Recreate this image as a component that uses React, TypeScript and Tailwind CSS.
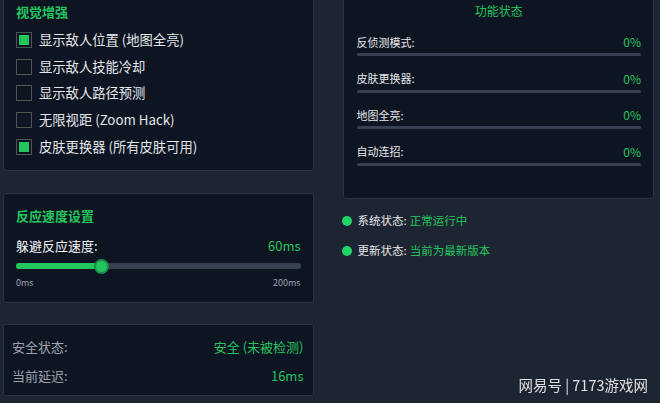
import React from "react";

const font = { fontFamily: '"Noto Sans CJK SC", "Noto Sans", sans-serif' };

const features = [
  { label: "显示敌人位置 (地图全亮)", on: true },
  { label: "显示敌人技能冷却", on: false },
  { label: "显示敌人路径预测", on: false },
  { label: "无限视距 (Zoom Hack)", on: false },
  { label: "皮肤更换器 (所有皮肤可用)", on: true },
];

const statusRows = ["反侦测模式:", "皮肤更换器:", "地图全亮:", "自动连招:"];

export default function App() {
  const speed = 60;
  const pct = (speed / 200) * 100;

  return (
    <div
      className="relative w-[660px] h-[403px] overflow-hidden bg-[#1e2532] text-[#e5e7eb]"
      style={font}
    >
      <div className="flex pl-[3px] pr-[6px] gap-[29px]">
        {/* Left column */}
        <div className="w-[311px] flex flex-col">
          {/* Visual enhancements */}
          <div className="-mt-[10px] h-[181px] bg-[#0e1522] border border-[#2a3343] rounded-[3px] pt-[11px] px-[12px]">
            <h3 className="h-[20px] leading-[20px] text-[13px] font-bold text-[#22c55e]">视觉增强</h3>
            <div className="mt-[5px] flex flex-col">
              {features.map((f) => (
                <div key={f.label} className="h-[26.6px] flex items-center gap-[7px]">
                  <div className="w-[16px] h-[16px] border border-[#4b5a55] flex items-center justify-center">
                    {f.on && <div className="w-[10px] h-[10px] bg-[#22c55e]" />}
                  </div>
                  <span className="text-[13.3px] leading-[18px] text-[#e5e7eb]">{f.label}</span>
                </div>
              ))}
            </div>
          </div>

          {/* Reaction speed */}
          <div className="mt-[22px] h-[110px] bg-[#0e1522] border border-[#2a3343] rounded-[3px] pt-[12px] px-[12px]">
            <h3 className="h-[20px] leading-[20px] text-[13px] font-bold text-[#22c55e]">反应速度设置</h3>
            <div className="mt-[10px] h-[20px] flex items-center justify-between">
              <span className="text-[13px] text-[#f3f4f6]">躲避反应速度:</span>
              <span className="text-[13px] text-[#22c55e]">{speed}ms</span>
            </div>
            <div className="relative mt-[3px] h-[14px] flex items-center">
              <div className="w-full h-[6px] rounded-full bg-[#374151]">
                <div className="h-full rounded-full bg-[#22c55e]" style={{ width: `${pct}%` }} />
              </div>
              <div
                className="absolute w-[15px] h-[15px] -ml-[7px] rounded-full bg-[#22c55e] border-2 border-[#1c8f4a]"
                style={{ left: `${pct}%` }}
              />
            </div>
            <div className="mt-[4px] h-[12px] flex items-center justify-between text-[9px] text-[#9ca3af]">
              <span>0ms</span>
              <span>200ms</span>
            </div>
          </div>

          {/* Safety */}
          <div className="mt-[21px] h-[72px] bg-[#0e1522] border border-[#2a3343] rounded-[3px] pt-[12px] pl-[8px] pr-[9px]">
            <div className="h-[20px] flex items-center justify-between text-[13px]">
              <span className="text-[#9ca3af]">安全状态:</span>
              <span className="text-[#22c55e]">安全 (未被检测)</span>
            </div>
            <div className="mt-[9px] h-[20px] flex items-center justify-between text-[13px]">
              <span className="text-[#9ca3af]">当前延迟:</span>
              <span className="text-[#22c55e]">16ms</span>
            </div>
          </div>
        </div>

        {/* Right column */}
        <div className="w-[312px] flex flex-col">
          <div className="-mt-[10px] h-[209px] bg-[#0e1522] border border-[#2a3343] rounded-[3px] pt-[10px] pl-[13px] pr-[12px]">
            <h3 className="h-[20px] leading-[20px] text-center text-[12px] text-[#22c55e]">功能状态</h3>
            <div className="mt-[13px] flex flex-col gap-[14.5px]">
              {statusRows.map((r) => (
                <div key={r}>
                  <div className="h-[16px] flex items-center justify-between">
                    <span className="text-[11px] text-[#e5e7eb]">{r}</span>
                    <span className="text-[12px] text-[#22c55e]">0%</span>
                  </div>
                  <div className="mt-[3px] h-[3px] rounded-full bg-[#374151]" />
                </div>
              ))}
            </div>
          </div>

          <div className="mt-[16px] flex flex-col gap-[18px]">
            <div className="flex items-center h-[12px] -ml-[1px]">
              <div className="w-[10px] h-[10px] rounded-full bg-[#22d36a]" />
              <span className="ml-[6px] text-[11.5px] text-[#e5e7eb]">系统状态:</span>
              <span className="ml-[3px] text-[11.5px] text-[#22c55e]">正常运行中</span>
            </div>
            <div className="flex items-center h-[12px] -ml-[1px]">
              <div className="w-[10px] h-[10px] rounded-full bg-[#22d36a]" />
              <span className="ml-[6px] text-[11.5px] text-[#e5e7eb]">更新状态:</span>
              <span className="ml-[3px] text-[11.5px] text-[#22c55e]">当前为最新版本</span>
            </div>
          </div>
        </div>
      </div>

      {/* Watermark */}
      <div className="absolute right-[12px] bottom-[10px] text-[14.5px] leading-[16px] text-[#f3f4f6] opacity-90 drop-shadow">
        网易号 | 7173游戏网
      </div>
    </div>
  );
}
